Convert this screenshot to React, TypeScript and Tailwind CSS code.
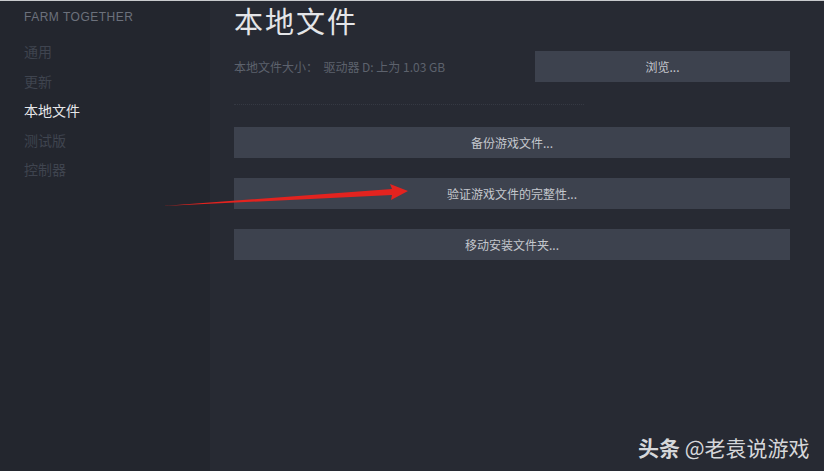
import React from 'react';

const font = { fontFamily: '"Noto Sans CJK SC", "Noto Sans", sans-serif' };

const menu = [
  { label: '通用', active: false },
  { label: '更新', active: false },
  { label: '本地文件', active: true },
  { label: '测试版', active: false },
  { label: '控制器', active: false },
];

const ActionButton: React.FC<{ label: string }> = ({ label }) => (
  <button className="flex h-[31px] w-full items-center justify-center bg-[#3d424e] text-[12px] text-[#c4c7cd]">
    {label}
  </button>
);

export default function App() {
  return (
    <div
      className="relative flex h-[471px] w-[824px] overflow-hidden border-t border-[#c8cacd] bg-[#272a33]"
      style={font}
    >
      <aside className="flex w-[210px] shrink-0 flex-col bg-[#23262e] pl-6 pt-[7px]">
        <div className="text-[12px] tracking-[0.5px] text-[#6c717c]" style={{ fontFamily: '"Liberation Sans", sans-serif' }}>
          FARM TOGETHER
        </div>
        <nav className="mt-[15px] flex flex-col gap-[9.5px]">
          {menu.map((m) => (
            <div
              key={m.label}
              className={`text-[14px] leading-[20px] ${m.active ? 'text-[#e6e7ea]' : 'text-[#3f444f]'}`}
            >
              {m.label}
            </div>
          ))}
        </nav>
      </aside>

      <main className="flex flex-1 flex-col pl-6 pr-[34px]">
        <h1 className="text-[29px] leading-[38px] tracking-[2px] text-[#e4e5e8]">本地文件</h1>
        <div className="mt-[12px] flex items-center">
          <div className="flex-1 text-[12px] text-[#5d626d]">本地文件大小：&nbsp;&nbsp;驱动器 D: 上为 1.03 GB</div>
          <button className="flex h-[31px] w-[255px] items-center justify-center bg-[#3d424e] text-[12px] text-[#c4c7cd]">
            浏览...
          </button>
        </div>
        <div className="mt-[22px] w-[350px] border-t border-dotted border-[#353943]" />
        <div className="mt-[22px] flex flex-col gap-[20px]">
          <ActionButton label="备份游戏文件..." />
          <ActionButton label="验证游戏文件的完整性..." />
          <ActionButton label="移动安装文件夹..." />
        </div>
      </main>

      <svg className="absolute left-0 top-0" width="824" height="471" viewBox="0 0 824 471">
        <polygon points="163,205 392,188 390,183 408,190 391,199 392,194" fill="#e3231f" />
      </svg>

      <div className="absolute left-[638px] top-[431px] text-[21px] text-[#d6d7da]">
        <span className="font-bold">头条</span> @老袁说游戏
      </div>
    </div>
  );
}
